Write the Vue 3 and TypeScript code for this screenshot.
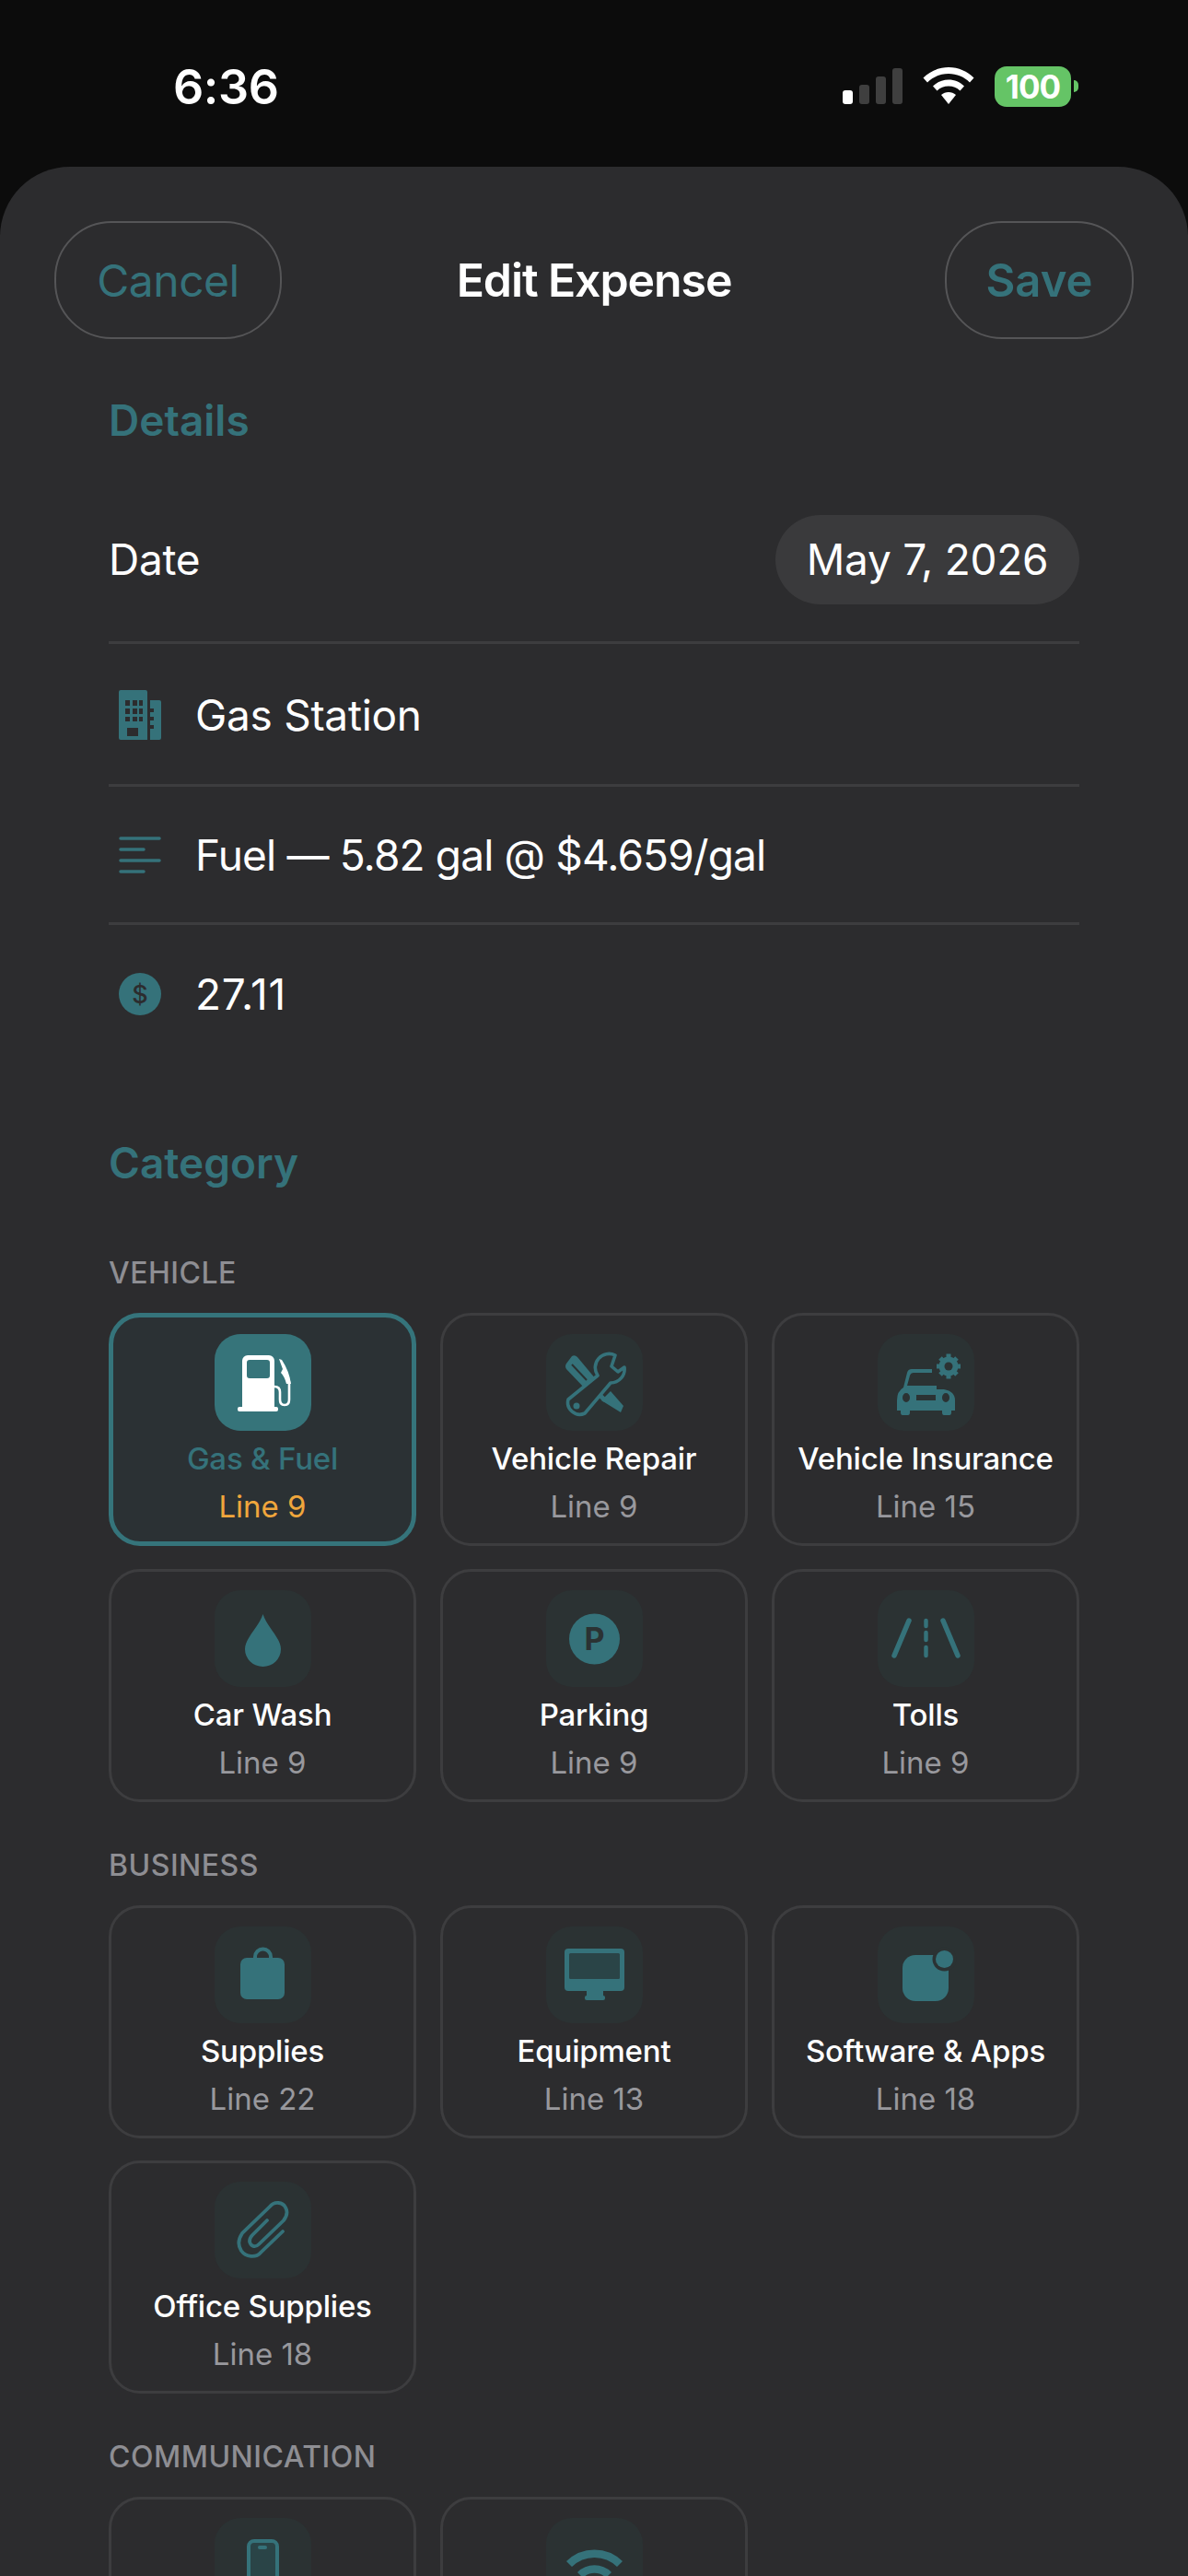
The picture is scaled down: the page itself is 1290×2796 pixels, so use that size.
<template>
  <div class="screen">
    <div class="status-bar">
      <span class="time">6:36</span>
      <div class="status-icons">
        <div class="signal">
          <i class="bar b1"></i>
          <i class="bar b2"></i>
          <i class="bar b3"></i>
          <i class="bar b4"></i>
        </div>
        <svg class="wifi" width="56" height="40" viewBox="0 0 56 40">
          <path d="M28 0C17 0 7.500 4.500 0.500 11.500L5 16.500C11 10.500 19 7 28 7S45 10.500 51 16.500L55.500 11.500C48.500 4.500 39 0 28 0Z" fill="#fff" />
          <path d="M28 13.500C21.500 13.500 15.500 16 11 20.500L15.500 25.500C18.800 22.200 23.200 20.500 28 20.500S37.200 22.200 40.500 25.500L45 20.500C40.500 16 34.500 13.500 28 13.500Z" fill="#fff" />
          <path d="M28 27C25 27 22.300 28 20 30L28 40L36 30C33.700 28 31 27 28 27Z" fill="#fff" />
        </svg>
        <div class="battery">
          <span class="battery-level">100</span>
          <i class="battery-nub"></i>
        </div>
      </div>
    </div>

    <div class="sheet">
      <div class="nav">
        <button class="nav-btn cancel">Cancel</button>
        <span class="nav-title">Edit Expense</span>
        <button class="nav-btn save">Save</button>
      </div>

      <div class="content">
        <h2 class="section-title details-title">Details</h2>

        <div class="date-row">
          <span class="row-text">Date</span>
          <span class="date-pill">May 7, 2026</span>
        </div>

        <div class="field merchant">
          <svg class="field-icon" width="46" height="54" viewBox="0 0 46 54">
            <path fill-rule="evenodd" d="M2 0H29A2 2 0 0 1 31 2V54H2A2 2 0 0 1 0 52V2A2 2 0 0 1 2 0ZM7 11V17H12V11ZM15 11V17H20V11ZM22 11V17H26V11ZM7 20V26H12V20ZM15 20V26H20V20ZM22 20V26H26V20ZM7 29V34H12V29ZM15 29V34H20V29ZM22 29V34H26V29ZM9 41V50H21V41Z" fill="#35727a" />
            <path fill-rule="evenodd" d="M34 11H44A2 2 0 0 1 46 13V52A2 2 0 0 1 44 54H34ZM34 20V24H38V20ZM34 29V33H38V29ZM34 38V42H38V38Z" fill="#35727a" />
          </svg>
          <span class="row-text">Gas Station</span>
        </div>

        <div class="field notes">
          <svg class="field-icon" width="46" height="40" viewBox="0 0 46 40">
            <path d="M2 2H44M2 14H27M2 26H44M2 38H27" stroke="#35727a" stroke-width="3.500" stroke-linecap="round" />
          </svg>
          <span class="row-text">Fuel — 5.82 gal @ $4.659/gal</span>
        </div>

        <div class="field amount">
          <span class="dollar">$</span>
          <span class="row-text">27.11</span>
        </div>

        <h2 class="section-title category-title">Category</h2>

        <div v-for="group in groups" :key="group.label" class="group">
          <div class="group-label">{{ group.label }}</div>
          <div class="card-grid">
            <div
              v-for="item in group.items"
              :key="item.name"
              class="card"
              :class="{ selected: item.selected }"
            >
              <div class="tile">
                <svg width="105" height="105" viewBox="0 0 105 105">
                  <g v-if="item.icon === 'fuel'" fill="#fff">
                    <path fill-rule="evenodd" d="M30 29A6 6 0 0 1 36 23H59A6 6 0 0 1 65 29V79H30ZM35 31V45A3 3 0 0 0 38 48H57A3 3 0 0 0 60 45V31A3 3 0 0 0 57 28H38A3 3 0 0 0 35 31Z" />
                    <rect x="25" y="79" width="44" height="5" rx="2" />
                    <path d="M65 57Q71 57 71 63V71Q71 77 76 77Q81 77 81 71V52L77 41" fill="none" stroke="#fff" stroke-width="2.600" />
                    <path d="M70 27L73 28Q81 40 83 54L78 54Q76 46 72 42L74 38Z" />
                  </g>
                  <g v-else-if="item.icon === 'tools'">
                    <path d="M28 24L22 32Q20 35 22 38L42 59L54 49L34 25Q31 22 28 24Z" fill="#35727a" />
                    <path d="M28 33L44 50" stroke="#2b3233" stroke-width="2" />
                    <path d="M48 56L64 72" stroke="#35727a" stroke-width="5" />
                    <path d="M60 72L70 62L84 78L81 85Z" fill="#35727a" />
                    <path d="M75 23A15 15 0 0 0 56 45L24 71A13 13 0 0 0 42 86L70 53A15 15 0 0 0 85 36L78 41L71 35Z" fill="#2b3233" stroke="#35727a" stroke-width="3.600" stroke-linejoin="round" />
                    <circle cx="33" cy="78" r="3.500" fill="#35727a" />
                  </g>
                  <g v-else-if="item.icon === 'car'">
                    <path fill-rule="evenodd" d="M37 38H59V42H39Q36 42 35 45L32 56H64V60H72Q84 62 84 72V83H80V85Q80 88 78 88H72Q70 88 70 85V83H35V85Q35 88 33 88H27Q25 88 25 85V83H21V72Q21 62 28 58L32 42Q33 38 37 38ZM31 64A4 5 0 0 0 31 74A4 5 0 0 0 31 64ZM74 64A4 5 0 0 0 74 74A4 5 0 0 0 74 64ZM42 66V72H63V66Z" fill="#35727a" />
                    <path d="M77 21.500V48.500M64 35H90M68 26L86 44M86 26L68 44" stroke="#35727a" stroke-width="5" />
                    <circle cx="77" cy="35" r="10.500" fill="#35727a" />
                    <circle cx="77" cy="35" r="4.500" fill="#2b3233" />
                  </g>
                  <path v-else-if="item.icon === 'drop'" d="M52.500 26C57 40 72 52 72 64A19.500 19 0 0 1 33 64C33 52 48 40 52.500 26Z" fill="#35727a" />
                  <g v-else-if="item.icon === 'parking'">
                    <circle cx="52.500" cy="53" r="27.500" fill="#35727a" />
                    <text x="52.500" y="65" class="parking-letter" text-anchor="middle">P</text>
                  </g>
                  <g v-else-if="item.icon === 'road'" stroke="#35727a" stroke-linecap="round">
                    <path d="M34 33L18 71M71 33L87 71" stroke-width="5.500" />
                    <path d="M52.500 33V39M52.500 46V54M52.500 62V71" stroke-width="4.500" />
                  </g>
                  <g v-else-if="item.icon === 'bag'">
                    <path d="M44 36V33A8.500 8.500 0 0 1 61 33V36" fill="none" stroke="#35727a" stroke-width="4" />
                    <rect x="28" y="34" width="48" height="45" rx="7" fill="#35727a" />
                  </g>
                  <g v-else-if="item.icon === 'monitor'">
                    <rect x="20" y="24" width="65" height="46" rx="4" fill="#35727a" />
                    <rect x="25" y="29" width="55" height="28" rx="1.500" fill="#2a4447" />
                    <rect x="44" y="70" width="18" height="6" fill="#35727a" />
                    <rect x="42" y="75" width="22" height="5" rx="2" fill="#35727a" />
                  </g>
                  <g v-else-if="item.icon === 'app'">
                    <rect x="27" y="31" width="50" height="50" rx="14" fill="#35727a" />
                    <circle cx="72.500" cy="35.500" r="13" fill="#2b3233" />
                    <circle cx="72.500" cy="35.500" r="9.500" fill="#35727a" />
                  </g>
                  <path v-else-if="item.icon === 'clip'" d="M74 54L50 77C45 83 34 82 29 75C25 69 26 62 30 56L60 27C65 21 74 22 77 28C80 33 78 38 75 42L48 68C44 72 39 70 38 65C38 62 39 60 41 58L57 42" fill="none" stroke="#35727a" stroke-width="3.800" stroke-linecap="round" />
                  <g v-else-if="item.icon === 'phone'">
                    <rect x="37" y="25" width="31" height="58" rx="6" fill="#2a4447" stroke="#35727a" stroke-width="4" />
                    <rect x="47" y="30" width="10" height="4" rx="2" fill="#35727a" />
                  </g>
                  <g v-else-if="item.icon === 'wifi'" fill="none" stroke="#35727a" stroke-width="8.500">
                    <path d="M25 50A39 39 0 0 1 80 50" />
                    <path d="M37 62A22 22 0 0 1 68 62" />
                  </g>
                </svg>
              </div>
              <div class="card-name">{{ item.name }}</div>
              <div class="card-line">{{ item.line }}</div>
            </div>
          </div>
        </div>
      </div>
    </div>
  </div>
</template>

<script setup lang="ts">
interface Category {
  name: string
  line: string
  icon: string
  selected?: boolean
}

interface CategoryGroup {
  label: string
  items: Category[]
}

const groups: CategoryGroup[] = [
  {
    label: 'VEHICLE',
    items: [
      { name: 'Gas & Fuel', line: 'Line 9', icon: 'fuel', selected: true },
      { name: 'Vehicle Repair', line: 'Line 9', icon: 'tools' },
      { name: 'Vehicle Insurance', line: 'Line 15', icon: 'car' },
      { name: 'Car Wash', line: 'Line 9', icon: 'drop' },
      { name: 'Parking', line: 'Line 9', icon: 'parking' },
      { name: 'Tolls', line: 'Line 9', icon: 'road' },
    ],
  },
  {
    label: 'BUSINESS',
    items: [
      { name: 'Supplies', line: 'Line 22', icon: 'bag' },
      { name: 'Equipment', line: 'Line 13', icon: 'monitor' },
      { name: 'Software & Apps', line: 'Line 18', icon: 'app' },
      { name: 'Office Supplies', line: 'Line 18', icon: 'clip' },
    ],
  },
  {
    label: 'COMMUNICATION',
    items: [
      { name: 'Phone', line: 'Line 25', icon: 'phone' },
      { name: 'Internet', line: 'Line 25', icon: 'wifi' },
    ],
  },
]
</script>

<style>
html,
body {
  margin: 0;
  height: 2796px;
  overflow: hidden;
  background: #0c0c0c;
}
</style>

<style scoped>
.screen {
  height: 2796px;
  overflow: hidden;
  background: #0c0c0c;
  font-family: Inter, 'Liberation Sans', sans-serif;
  color: #fff;
}

.status-bar {
  height: 181px;
  display: flex;
  justify-content: space-between;
  align-items: flex-start;
  padding: 0 127px 0 188px;
  box-sizing: border-box;
}

.time {
  margin-top: 65px;
  font-size: 52px;
  line-height: 60px;
  font-weight: 600;
  letter-spacing: -0.4px;
}

.status-icons {
  display: flex;
  align-items: flex-start;
  margin-top: 72px;
}

.signal {
  display: flex;
  align-items: flex-end;
  gap: 7px;
  height: 41px;
  margin-right: 22px;
}

.bar {
  width: 11px;
  border-radius: 3px;
  background: #3f3f3f;
}

.b1 {
  height: 15px;
  background: #fff;
}

.b2 {
  height: 21px;
}

.b3 {
  height: 30px;
}

.b4 {
  height: 39px;
}

.wifi {
  margin-right: 22px;
  margin-top: 1px;
}

.battery {
  position: relative;
  width: 83px;
  height: 44px;
  border-radius: 13px;
  background: #65c466;
  display: flex;
  align-items: center;
  justify-content: center;
}

.battery-level {
  font-size: 35px;
  font-weight: 700;
  letter-spacing: -1px;
}

.battery-nub {
  position: absolute;
  left: 86px;
  top: 15px;
  width: 5px;
  height: 13px;
  border-radius: 0 5px 5px 0;
  background: #65c466;
}

.sheet {
  height: 2615px;
  background: #2c2c2e;
  border-radius: 76px 76px 0 0;
}

.nav {
  display: grid;
  grid-template-columns: 1fr auto 1fr;
  align-items: center;
  padding: 59px 59px 0;
}

.nav-btn {
  height: 128px;
  border: 2px solid #555557;
  border-radius: 62px;
  background: transparent;
  color: #35727a;
  font-family: inherit;
  padding: 0;
}

.cancel {
  width: 247px;
  font-size: 48px;
  letter-spacing: -0.5px;
}

.save {
  width: 205px;
  justify-self: end;
  font-size: 49px;
  font-weight: 600;
}

.nav-title {
  font-size: 50px;
  font-weight: 600;
  letter-spacing: -1.1px;
}

.content {
  padding: 0 118px;
}

.section-title {
  margin: 0;
  font-size: 46px;
  line-height: 56px;
  font-weight: 600;
  color: #35727a;
}

.details-title {
  margin-top: 60px;
}

.row-text {
  font-size: 46px;
  line-height: 56px;
  letter-spacing: -0.3px;
}

.date-row {
  display: flex;
  justify-content: space-between;
  align-items: center;
  height: 207px;
  padding-top: 26px;
  box-sizing: border-box;
  border-bottom: 3px solid #3d3d3f;
  margin-top: 8px;
}

.date-pill {
  width: 330px;
  height: 97px;
  border-radius: 49px;
  background: #3a3a3c;
  display: flex;
  align-items: center;
  justify-content: center;
  font-size: 46px;
  letter-spacing: -0.3px;
}

.field {
  display: flex;
  align-items: center;
  box-sizing: border-box;
}

.merchant {
  height: 155px;
  padding-top: 2px;
  border-bottom: 3px solid #3d3d3f;
}

.notes {
  height: 150px;
  border-bottom: 3px solid #3d3d3f;
}

.notes .row-text {
  letter-spacing: -0.85px;
}

.amount {
  height: 150px;
}

.amount .row-text {
  letter-spacing: 0.8px;
}

.field-icon {
  margin-left: 11px;
  margin-right: 37px;
  flex: none;
}

.dollar {
  width: 46px;
  height: 46px;
  margin-left: 11px;
  margin-right: 37px;
  border-radius: 50%;
  background: #35727a;
  color: #2c2c2e;
  font-size: 27px;
  font-weight: 500;
  display: flex;
  align-items: center;
  justify-content: center;
  flex: none;
}

.category-title {
  margin-top: 80px;
  margin-bottom: 72px;
}

.group-label {
  font-size: 32px;
  line-height: 40px;
  font-weight: 500;
  letter-spacing: 0.5px;
  color: #8e8e93;
  margin-bottom: 23px;
}

.group {
  margin-top: 49px;
}

.card-grid {
  display: grid;
  grid-template-columns: repeat(3, 334px);
  gap: 24.5px 26px;
}

.card {
  height: 253px;
  box-sizing: border-box;
  border: 3px solid #3d3d3f;
  border-radius: 34px;
  display: flex;
  flex-direction: column;
  align-items: center;
  padding-top: 20px;
}

.card.selected {
  border: 5px solid #35747b;
  background: #2b3134;
  padding-top: 18px;
}

.tile {
  width: 105px;
  height: 105px;
  border-radius: 28px;
  background: #2b3233;
  flex: none;
}

.tile svg {
  display: block;
}

.selected .tile {
  background: #36747a;
}

.card-name {
  margin-top: 10px;
  font-size: 33px;
  line-height: 40px;
  font-weight: 500;
  letter-spacing: -0.2px;
}

.selected .card-name {
  color: #35727a;
}

.card-line {
  margin-top: 12px;
  font-size: 33px;
  line-height: 40px;
  color: #98989d;
}

.selected .card-line {
  color: #f0a63c;
}

.parking-letter {
  font-size: 34px;
  font-weight: 700;
  fill: #2b3233;
}
</style>
